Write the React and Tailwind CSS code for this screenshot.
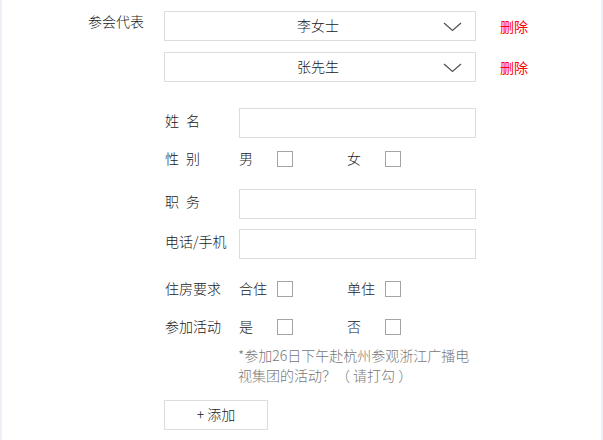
import React from 'react';

const FONT = "font-['Noto_Sans_CJK_SC','Microsoft_YaHei',sans-serif] font-light";

const Chevron = () => (
    <svg width="19" height="10" viewBox="0 0 19 10" className="absolute right-[13px] top-[10px]">
        <polyline points="1,1 9.5,8.5 18,1" fill="none" stroke="#555" strokeWidth="1.3" />
    </svg>
);

const SelectRow = ({ value }) => (
    <div className="flex items-center">
        <div className="relative w-[312px] h-[30px] border border-[#dcdcdc] flex items-center justify-center text-[14px] text-[#222]">
            <span className="-ml-[4px] pb-[2px]">{value}</span>
            <Chevron />
        </div>
        <span className="ml-[24px] text-[14px] font-normal text-[#ff0000]">删除</span>
    </div>
);

const Label = ({ children, className = '' }) => (
    <div className={`w-[75px] pl-[1px] text-[14px] text-[#222] leading-[20px] ${className}`}>{children}</div>
);

const SpacedLabel = ({ a, b, className = '' }) => (
    <Label className={className}>
        <span>{a}</span>
        <span className="ml-[7px]">{b}</span>
    </Label>
);

const Box = () => <div className="w-[16px] h-[16px] border border-[#a5a5a5] bg-white" />;

const Choice = ({ text, className = '' }) => (
    <div className={`flex items-center ${className}`}>
        <span className="w-[38px] pb-[3px] text-[14px] text-[#222] leading-[20px]">{text}</span>
        <Box />
    </div>
);

const InputRow = ({ label, className = '' }) => (
    <div className={`flex items-center ${className}`}>
        {label}
        <div className="w-[237px] h-[30px] border border-[#dcdcdc]" />
    </div>
);

const CheckRow = ({ label, a, b, className = '' }) => (
    <div className={`flex items-center h-[16px] ${className}`}>
        {label}
        <Choice text={a} />
        <Choice text={b} className="ml-[54px]" />
    </div>
);

export default function App() {
    return (
        <div className={`w-[603px] h-[440px] bg-white border-l-2 border-r-2 border-[#edf0f6] overflow-hidden ${FONT}`}>
            <div className="flex pt-[11px] pl-[86px]">
                <div className="w-[76px] text-[14px] text-[#222] leading-[20px]">参会代表</div>
                <div className="flex flex-col">
                    <div className="flex flex-col gap-[11px]">
                        <SelectRow value="李女士" />
                        <SelectRow value="张先生" />
                    </div>

                    <InputRow className="mt-[26px]" label={<SpacedLabel a="姓" b="名" className="pb-[6px]" />} />
                    <CheckRow className="mt-[13px]" label={<SpacedLabel a="性" b="别" className="pb-[3px]" />} a="男" b="女" />
                    <InputRow className="mt-[22px]" label={<SpacedLabel a="职" b="务" className="pb-[6px]" />} />
                    <InputRow className="mt-[10px]" label={<Label className="pb-[6px]">电话/手机</Label>} />
                    <CheckRow className="mt-[22px]" label={<Label className="pb-[3px]">住房要求</Label>} a="合住" b="单住" />
                    <CheckRow className="mt-[22px]" label={<Label className="pb-[3px]">参加活动</Label>} a="是" b="否" />

                    <p className="mt-[10px] ml-[74px] text-[14px] leading-[20px] text-[#777]">
                        *参加26日下午赴杭州参观浙江广播电<br />视集团的活动？（ 请打勾 ）
                    </p>

                    <button className="mt-[15px] w-[104px] h-[30px] pb-[2px] border border-[#dcdcdc] bg-white text-[14px] text-[#222]">
                        + 添加
                    </button>
                </div>
            </div>
        </div>
    );
}
